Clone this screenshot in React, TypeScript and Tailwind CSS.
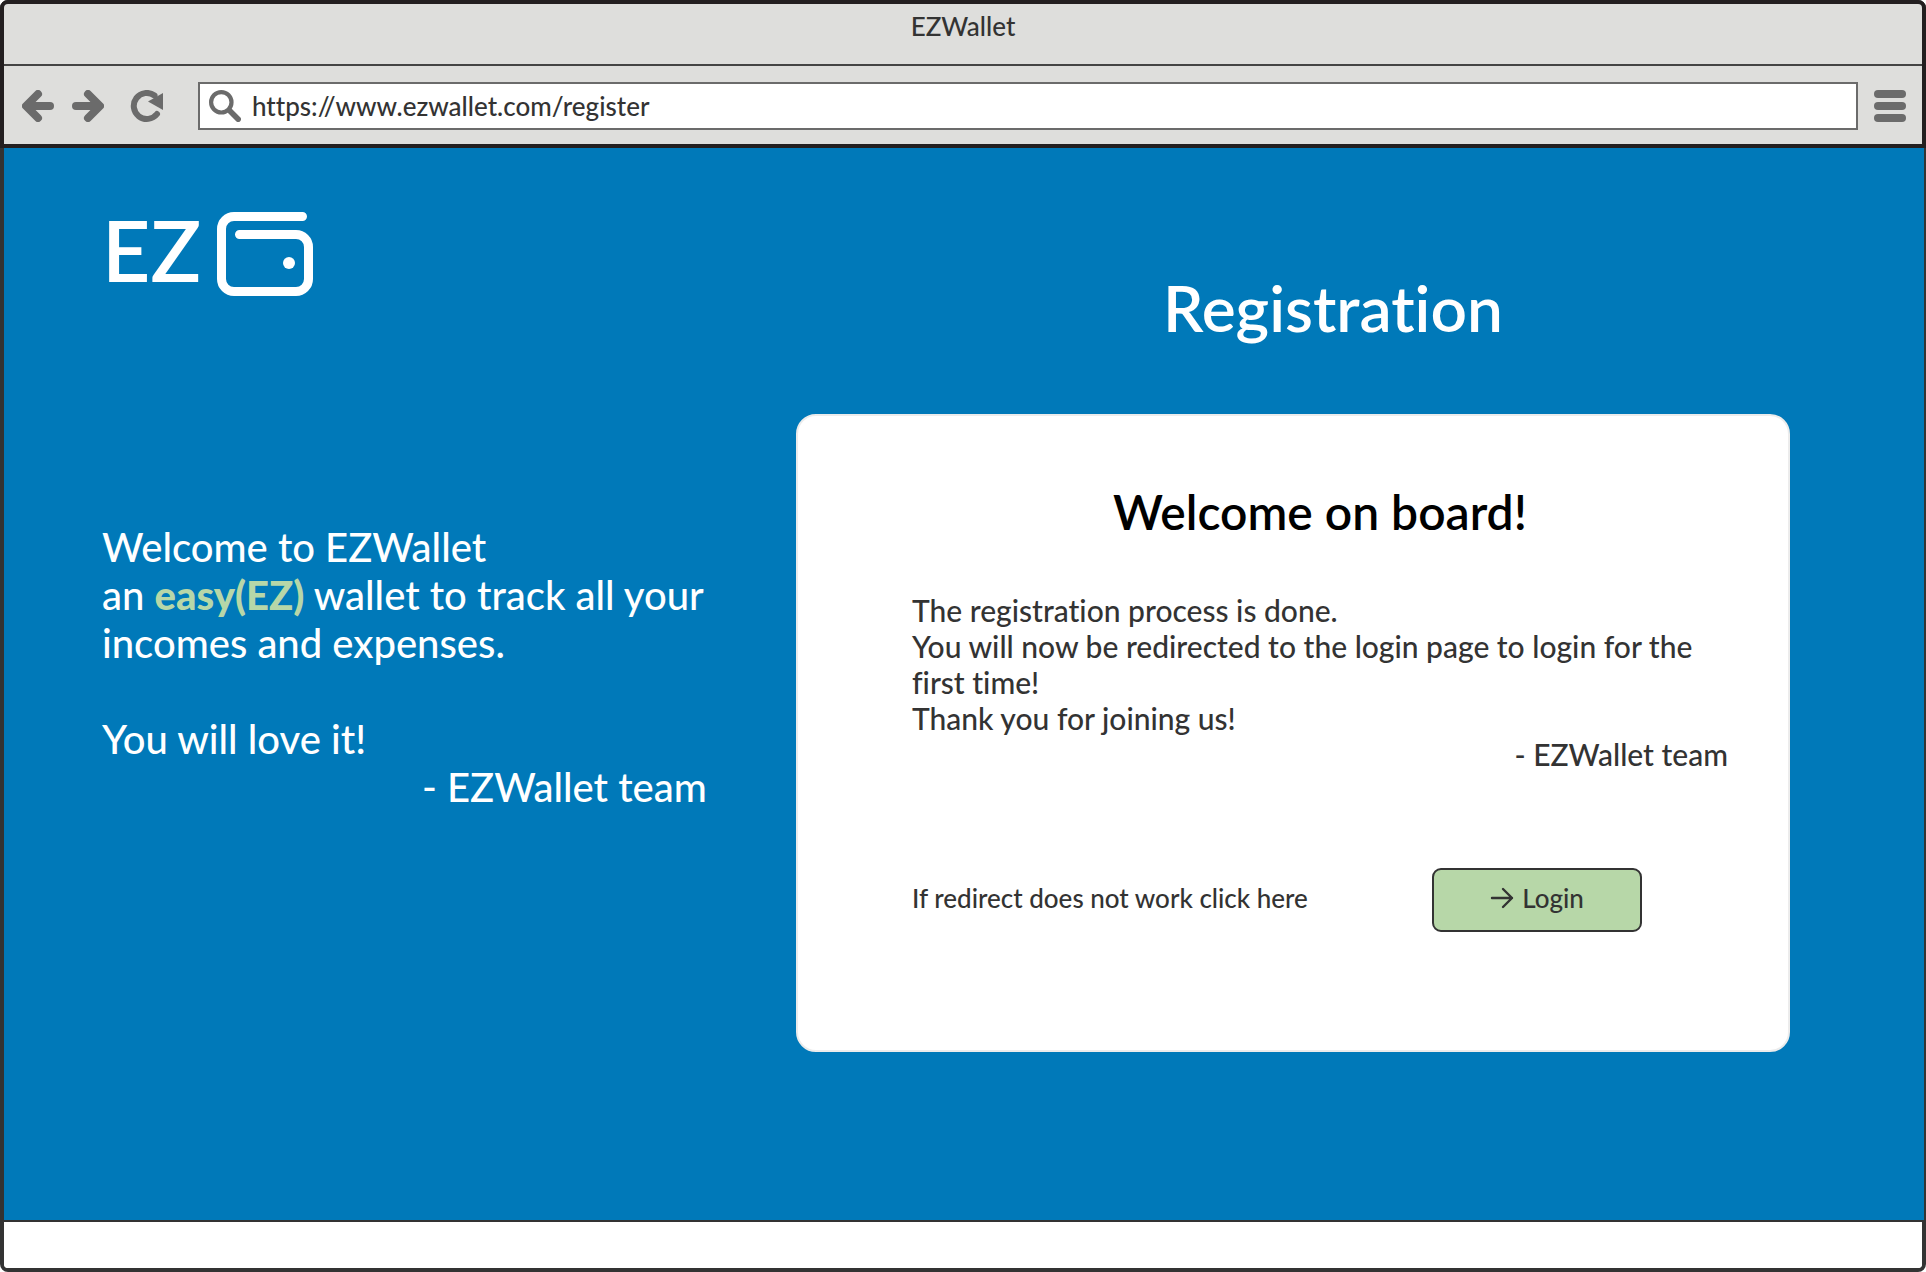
import React from "react";

function BackIcon() {
  return (
    <svg width="32" height="32" viewBox="0 0 32 32" fill="none" stroke="#6b6b6b" strokeWidth="8" strokeLinecap="round" strokeLinejoin="round" aria-hidden="true">
      <path d="M16 4 4 16 16 28" />
      <path d="M6 16h22" />
    </svg>
  );
}

function ForwardIcon() {
  return (
    <svg width="32" height="32" viewBox="0 0 32 32" fill="none" stroke="#6b6b6b" strokeWidth="8" strokeLinecap="round" strokeLinejoin="round" aria-hidden="true">
      <path d="M16 4 28 16 16 28" />
      <path d="M26 16H4" />
    </svg>
  );
}

function ReloadIcon() {
  return (
    <svg width="34" height="32" viewBox="0 0 34 32" fill="none" aria-hidden="true">
      <path d="M27 24A13 13 0 1 1 24.500 5.500" stroke="#6b6b6b" strokeWidth="6" strokeLinecap="round" />
      <path d="M33 3v17L18 11.500Z" fill="#6b6b6b" />
    </svg>
  );
}

function SearchIcon() {
  return (
    <svg className="shrink-0" width="32" height="32" viewBox="0 0 32 32" fill="none" stroke="#6b6b6b" strokeLinecap="round" aria-hidden="true">
      <circle cx="12.3" cy="12.3" r="10.2" strokeWidth="4.2" />
      <path d="m21 21 8.2 8.2" strokeWidth="5.6" />
    </svg>
  );
}

function MenuIcon() {
  return (
    <svg width="32" height="32" viewBox="0 0 32 32" fill="#6b6b6b" aria-hidden="true">
      <rect width="32" height="8" rx="4" />
      <rect y="12" width="32" height="8" rx="4" />
      <rect y="24" width="32" height="8" rx="4" />
    </svg>
  );
}

function WalletIcon() {
  return (
    <svg width="96" height="84" viewBox="0 0 96 84" fill="none" stroke="#fff" strokeWidth="9" strokeLinecap="round" aria-hidden="true">
      <path d="M85.500 4.500H17A12.500 12.500 0 0 0 4.500 17v50A12.500 12.500 0 0 0 17 79.500h62A12.500 12.500 0 0 0 91.500 67V35A12.500 12.500 0 0 0 79 22.500H22.500" />
      <circle cx="72" cy="51" r="6" fill="#fff" stroke="none" />
    </svg>
  );
}

function ArrowIcon() {
  return (
    <svg width="24" height="24" viewBox="0 0 24 24" fill="none" stroke="#333" strokeWidth="2.4" strokeLinecap="round" strokeLinejoin="round" aria-hidden="true">
      <path d="M2 12h20M13 3l9 9-9 9" />
    </svg>
  );
}

export default function App() {
  return (
    <div className="flex min-h-screen flex-col rounded-lg border-4 border-[#333] bg-white font-['Lato','Liberation_Sans',sans-serif] font-medium text-[#333] [font-variant-ligatures:none]">
      <header className="-mx-1 -mt-1 rounded-t-lg border-4 border-[#231f20] bg-[#dededc]">
        <div className="flex h-[62px] justify-center border-b-2 border-[#444] pt-[6px]">
          <span className="text-[26px] leading-8">EZWallet</span>
        </div>
        <nav className="flex h-[78px] items-center pt-[2px] pr-4 pl-[18px]">
          <button type="button" aria-label="Back"><BackIcon /></button>
          <button type="button" aria-label="Forward" className="ml-[18px]"><ForwardIcon /></button>
          <button type="button" aria-label="Reload" className="ml-[26px]"><ReloadIcon /></button>
          <label className="mr-4 ml-[34px] flex h-12 flex-1 items-center gap-[11px] border-2 border-[#6b6b6b] bg-white pl-[9px]">
            <SearchIcon />
            <input aria-label="Address" type="text" defaultValue="https://www.ezwallet.com/register" className="h-full min-w-0 flex-1 bg-transparent text-[26px] outline-none" />
          </label>
          <button type="button" aria-label="Menu"><MenuIcon /></button>
        </nav>
      </header>

      <main className="-mr-0.5 grid flex-1 grid-cols-[792fr_994fr_134fr] bg-[#0079b9]">
        <section className="pt-16 pl-[98px] text-white">
          <div className="flex items-start gap-4">
            <span className="text-[84px] leading-[76px] font-semibold">EZ</span>
            <WalletIcon />
          </div>
          <div className="mt-[227px] text-[40px] leading-12 whitespace-nowrap">
            <p>Welcome to EZWallet</p>
            <p>an <strong className="font-black text-[#b7d7a8]">easy(EZ)</strong> wallet to track all your</p>
            <p>incomes and expenses.</p>
            <p className="mt-12">You will love it!</p>
            <p className="pl-80">- EZWallet team</p>
          </div>
        </section>

        <section>
          <h1 className="pt-[120px] pl-20 text-center text-[64px] leading-20 font-semibold text-white">Registration</h1>
          <div className="mt-[66px] rounded-[20px] border-2 border-[#ececec] bg-white pt-[66px] pr-[60px] pb-[118px] pl-[114px]">
            <h2 className="text-center text-[48px] leading-[60px] font-semibold text-black">Welcome on board!</h2>
            <div className="mt-[50px] text-[30px] leading-9">
              <p>The registration process is done.</p>
              <p>You will now be redirected to the login page to login for the first time!</p>
              <p>Thank you for joining us!</p>
              <p className="text-right">- EZWallet team</p>
            </div>
            <div className="mt-24 flex items-center justify-between pr-[86px]">
              <p className="pb-1 text-[26px] leading-8">If redirect does not work click here</p>
              <button type="button" className="flex h-16 w-[210px] items-center justify-center gap-2 rounded-[9px] border-2 border-[#333] bg-[#b7d7a8] pb-1 text-[26px] leading-8">
                <ArrowIcon />
                Login
              </button>
            </div>
          </div>
        </section>
      </main>

      <footer className="h-12 rounded-b border-t-2 border-[#333] bg-white" />
    </div>
  );
}
